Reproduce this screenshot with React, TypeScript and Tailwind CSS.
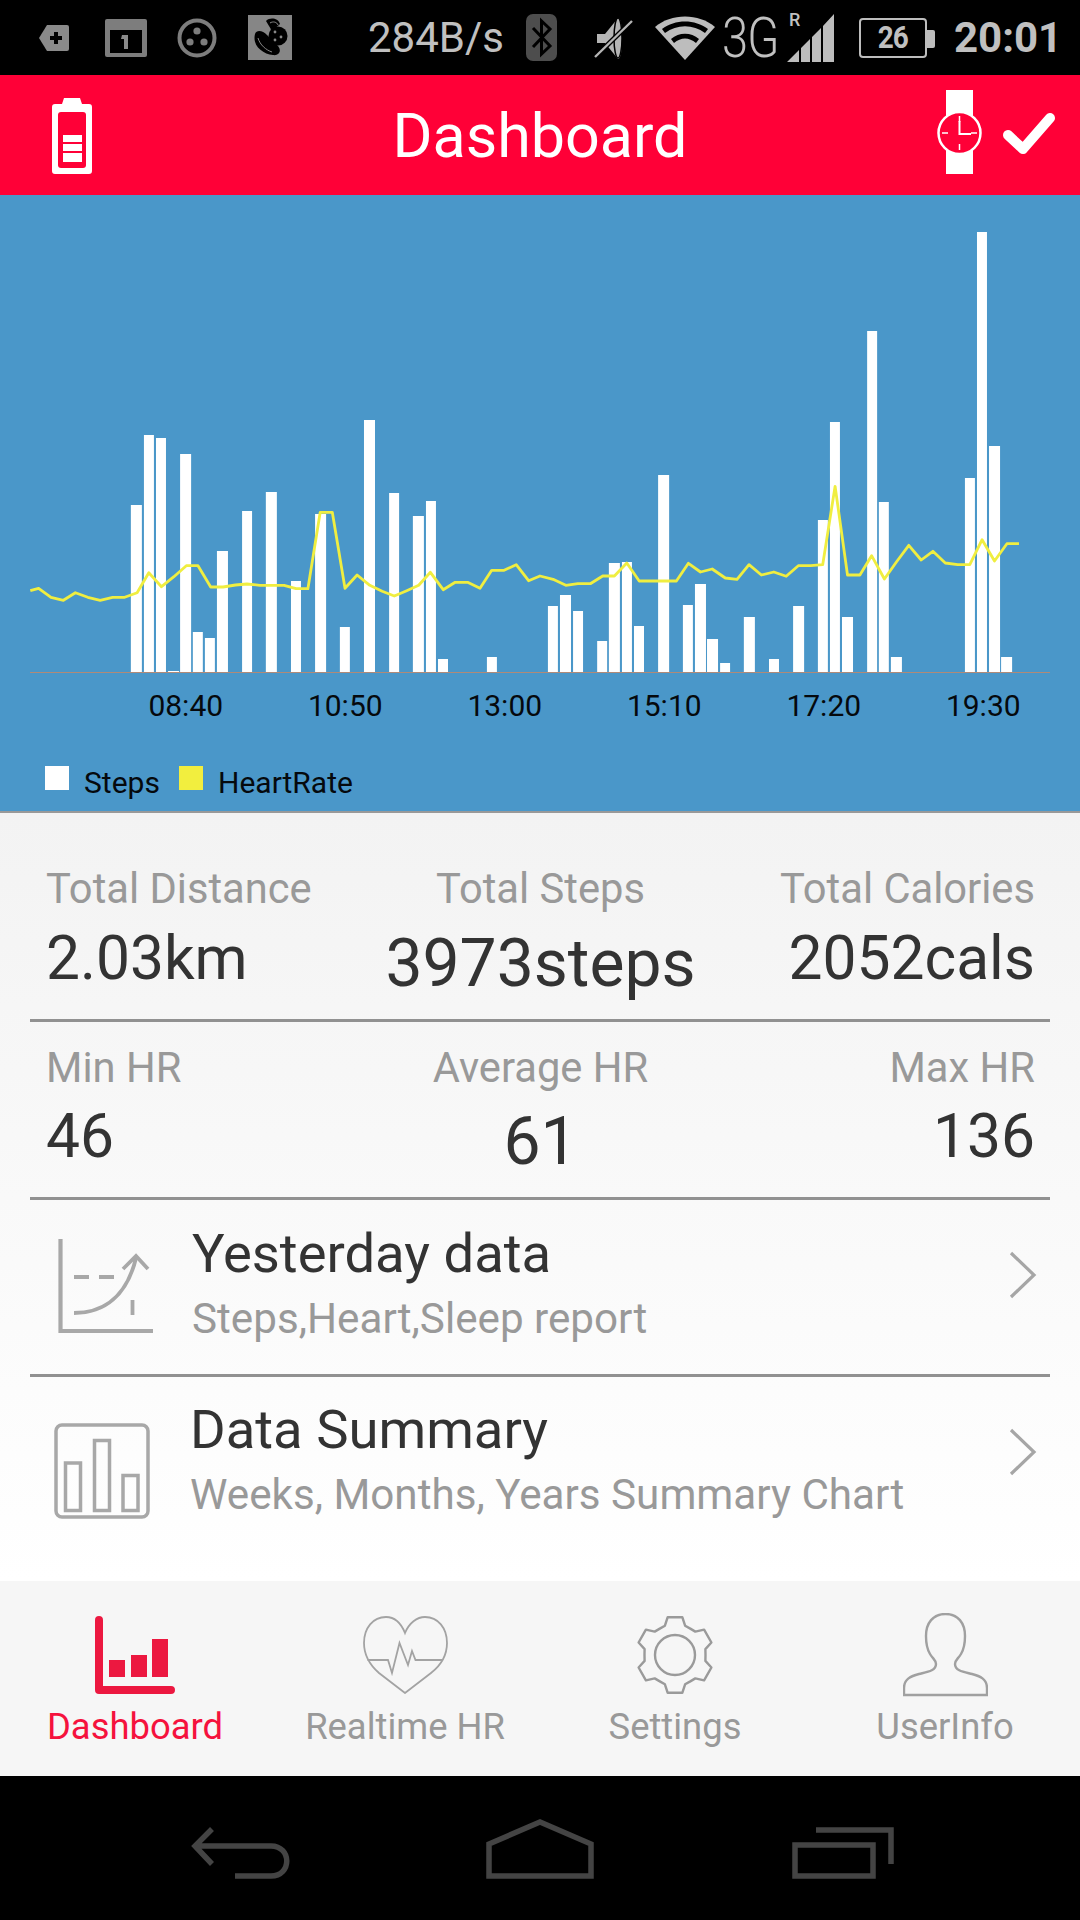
const K = 2.904;
const leftBars = [[380,412,505],[418,447,435],[453,482,438],[488,520,671],[523,555,454],[560,589,632],[595,624,638],[630,662,551],[703,732,511],[772,804,492],[845,874,581],[915,947,514],[987,1016,627],[1057,1089,420],[1130,1159,493],[1199,1231,516],[1237,1266,501],[1272,1301,659],[1414,1443,657]];
const rightBars = [[23,52,606],[58,90,595],[96,125,611],[166,195,641],[200,232,563],[238,267,562],[273,302,626],[343,375,475],[415,444,605],[450,482,584],[485,517,639],[523,552,663],[592,624,617],[665,694,659],[735,767,606],[807,836,520],[842,871,422],[877,909,617],[950,979,331],[984,1013,502],[1019,1051,657],[1234,1263,478],[1269,1298,232],[1304,1336,446],[1339,1371,657]];
const leftLine = [[88,572],[112,565],[148,592],[184,601],[219,578],[255,592],[291,601],[327,592],[362,592],[398,578],[432,518],[469,560],[505,530],[541,497],[575,497],[612,561],[648,561],[684,555],[717,552],[755,556],[825,556],[860,566],[894,566],[930,337],[965,337],[1002,565],[1037,525],[1074,556],[1110,574],[1145,588],[1181,572],[1216,556],[1250,517],[1287,569],[1322,547],[1358,547],[1394,565],[1428,511],[1464,511],[1499,494],[1535,542]];
const rightLine = [[0,528],[38,538],[75,556],[110,551],[146,551],[182,528],[216,528],[252,489],[288,543],[324,543],[360,543],[396,543],[431,490],[466,516],[500,507],[538,534],[572,538],[607,494],[643,525],[679,516],[715,529],[750,497],[786,497],[821,494],[857,259],[893,525],[929,525],[963,467],[1000,537],[1035,486],[1071,436],[1107,480],[1141,454],[1177,489],[1213,494],[1248,494],[1284,419],[1320,483],[1356,431],[1391,431]];
const bars = [
  ...leftBars.map(([l, r, t]) => ({ x: l / K, w: (r - l) / K, t })),
  ...rightBars.map(([l, r, t]) => ({ x: 540 + l / K, w: (r - l) / K, t })),
];
const linePts = [
  ...leftLine.map(([x, y]) => `${(x / K).toFixed(1)},${(400 + y / 3).toFixed(1)}`),
  ...rightLine.map(([x, y]) => `${(540 + x / K).toFixed(1)},${(400 + y / 3).toFixed(1)}`),
].join(" ");

function gearPath() {
  const cx = 38, cy = 40, out: string[] = [];
  for (let k = 0; k < 6; k++) {
    const a = -90 + k * 60;
    const pts: [number, number][] = [[-30, 30.5], [-19, 31], [-11, 38.5], [11, 38.5], [19, 31]];
    pts.forEach(([d, r]) => {
      const t = ((a + d) * Math.PI) / 180;
      out.push(`${(cx + r * Math.cos(t)).toFixed(1)},${(cy + r * Math.sin(t)).toFixed(1)}`);
    });
  }
  return out.join(" ");
}

function StatusBar() {
  return (
    <div className="flex h-[75px] shrink-0 items-center bg-black pl-[38px] text-[#c0c0c0]">
      <svg width="32" height="28" viewBox="0 0 32 28" className="shrink-0">
        <path d="M9 1H29a2 2 0 0 1 2 2V25a2 2 0 0 1-2 2H9L1 14Z" fill="#8a8a8a" />
        <path d="M18 8v12M12 14h12" stroke="#000" strokeWidth="4" />
      </svg>
      <svg width="42" height="38" viewBox="0 0 42 38" className="ml-[35px] shrink-0">
        <rect x="0" y="0" width="42" height="38" rx="2" fill="#7d7d7d" />
        <rect x="5" y="11" width="32" height="23" fill="#000" />
        <path d="M17 16h6v14h-4V20h-3Z" fill="#8a8a8a" />
      </svg>
      <svg width="40" height="40" viewBox="0 0 40 40" className="ml-[30px] shrink-0">
        <circle cx="20" cy="20" r="17.5" fill="none" stroke="#7d7d7d" strokeWidth="4" />
        <circle cx="20" cy="13" r="3.6" fill="#7d7d7d" />
        <circle cx="13" cy="24" r="3.6" fill="#7d7d7d" />
        <circle cx="27" cy="24" r="3.6" fill="#7d7d7d" />
      </svg>
      <svg width="44" height="45" viewBox="0 0 44 45" className="ml-[31px] shrink-0">
        <rect width="44" height="45" fill="#868686" />
        <path d="M18 6C22 2 30 3 32 9L24 16Z" fill="#000" />
        <path d="M7 19C9 14 15 16 19 20L30 31C34 36 31 41 25 40C15 39 4 31 7 19Z" fill="#000" />
        <circle cx="30" cy="21" r="9.5" fill="#000" />
        <circle cx="27" cy="17" r="1.4" fill="#888" />
        <circle cx="33" cy="22" r="1.4" fill="#888" />
        <circle cx="27" cy="25" r="1.4" fill="#888" />
        <path d="M22 8C25 6 29 7 30 10M10 23C12 30 18 35 24 37" stroke="#888" strokeWidth="1" fill="none" />
      </svg>
      <span className="ml-[76px] w-[136px] shrink-0 font-['Roboto',sans-serif] text-[42px] leading-none whitespace-nowrap">284B/s</span>
      <svg width="31" height="47" viewBox="0 0 31 47" className="ml-[22px] shrink-0">
        <rect width="31" height="47" rx="7" fill="#4d4d4d" />
        <path d="M7 14L24 32L15.5 40V7L24 15L7 33" fill="none" stroke="#000" strokeWidth="3" />
      </svg>
      <svg width="40" height="46" viewBox="0 0 40 46" className="ml-[37px] shrink-0">
        <path d="M3 19H11L24 3C27 3 28 12 28 23C28 34 27 44 24 44L11 28H3Z" fill="#b5b5b5" />
        <ellipse cx="24" cy="23" rx="4" ry="20" fill="none" stroke="#000" strokeWidth="1.5" />
        <path d="M1 42L38 6" stroke="#000" strokeWidth="5" />
        <path d="M1 42L38 6" stroke="#b5b5b5" strokeWidth="2.4" />
      </svg>
      <svg width="60" height="44" viewBox="0 0 60 44" className="ml-[21px] shrink-0">
        <path d="M0 11C16 -3 44 -3 60 11L30 44Z" fill="#bdbdbd" />
        <path d="M7 13C20 3 40 3 53 13L50 17C38 8 22 8 10 17Z" fill="#000" />
        <path d="M16 23C24 16 36 16 44 23L41 27C34 21 26 21 19 27Z" fill="#000" />
      </svg>
      <span className="ml-[7px] inline-block w-[60px] origin-left scale-x-[0.84] font-['Roboto',sans-serif] text-[56px] leading-none font-light tracking-[-1px] whitespace-nowrap">3G</span>
      <div className="relative ml-[5px] h-[48px] w-[48px] shrink-0">
        <span className="absolute top-[-3px] left-[2px] font-['Roboto',sans-serif] text-[18px] leading-none font-medium">R</span>
        <svg width="48" height="48" viewBox="0 0 48 48" className="absolute top-0 left-0">
          <path d="M0 48L12 36V48ZM14 34L23 25V48H14ZM25 23L34 14V48H25ZM36 12L47 0V48H36Z" fill="#bdbdbd" />
        </svg>
      </div>
      <div className="relative ml-[24px] flex h-[40px] w-[68px] shrink-0 items-center justify-center rounded-[4px] border-2 border-[#bdbdbd]">
        <span className="font-['Roboto',sans-serif] text-[31px] leading-none font-bold tracking-[-1px] inline-block scale-x-90">26</span>
        <div className="absolute top-[10px] right-[-10px] h-[18px] w-[8px] rounded-r-[2px] bg-[#bdbdbd]" />
      </div>
      <span className="ml-[27px] font-['Roboto',sans-serif] text-[42px] leading-none font-bold whitespace-nowrap">20:01</span>
    </div>
  );
}

function AppBar() {
  return (
    <div className="relative flex h-[120px] shrink-0 items-center justify-center bg-[#ff0037]">
      <svg width="40" height="76" viewBox="0 0 40 76" className="absolute top-[23px] left-[52px]">
        <path d="M12 0H28L30 6H37a3 3 0 0 1 3 3V73a3 3 0 0 1-3 3H3a3 3 0 0 1-3-3V9a3 3 0 0 1 3-3H10Z" fill="#fff" />
        <rect x="6" y="14" width="28" height="56" rx="3" fill="#ff0037" />
        <path d="M11 37H30V44H11ZM11 46H30V53H11ZM11 55H30V64H11Z" fill="#fff" />
      </svg>
      <span className="pt-[2px] font-['Roboto',sans-serif] text-[61px] leading-none text-white">Dashboard</span>
      <svg width="48" height="84" viewBox="0 0 48 84" className="absolute top-[15px] left-[936px]">
        <rect x="10" y="0" width="27" height="84" fill="#fff" />
        <circle cx="23.5" cy="43" r="21" fill="#ff0037" stroke="#fff" strokeWidth="2.5" />
        <path d="M23.5 26V32M23.5 54V60M6 43H12M35 43H41" stroke="#fff" strokeWidth="1.5" />
        <path d="M23.5 31V44H35" stroke="#fff" strokeWidth="2" fill="none" />
      </svg>
      <svg width="52" height="42" viewBox="0 0 52 42" className="absolute top-[38px] left-[1003px]">
        <path d="M5 22L20 36L47 5" stroke="#fff" strokeWidth="10" fill="none" strokeLinecap="round" strokeLinejoin="round" />
      </svg>
    </div>
  );
}

function Chart() {
  const labels = ["08:40", "10:50", "13:00", "15:10", "17:20", "19:30"];
  return (
    <div className="flex h-[618px] shrink-0 flex-col border-b-2 border-[#999999] bg-[#4a97c9]">
      <svg width="1080" height="480" viewBox="0 195 1080 480" className="block shrink-0">
        {bars.map((b, i) => (
          <rect key={i} x={b.x} y={b.t} width={b.w} height={672 - b.t} fill="#fff" />
        ))}
        <line x1="30" x2="1050" y1="672.5" y2="672.5" stroke="#b08a78" strokeWidth="1" />
        <polyline points={linePts} fill="none" stroke="#f0ee40" strokeWidth="2.8" strokeLinejoin="round" />
      </svg>
      <div className="mt-[13px] flex pl-[106px]">
        {labels.map((l) => (
          <span key={l} className="w-[159.5px] text-center font-['Roboto',sans-serif] text-[30px] leading-[36px] text-[#05090d]">{l}</span>
        ))}
      </div>
      <div className="mt-[41px] flex items-center pl-[45px] font-['Roboto',sans-serif] text-[30px] leading-[36px] text-[#05090d]">
        <div className="mb-[10px] h-[24px] w-[24px] bg-white" />
        <span className="ml-[15px] w-[95px]">Steps</span>
        <div className="mb-[10px] h-[24px] w-[24px] bg-[#f2ee3e]" />
        <span className="ml-[15px]">HeartRate</span>
      </div>
    </div>
  );
}

function Stat({ label, value, align, gap }: { label: string; value: string; align: "left" | "center" | "right"; gap: string }) {
  const a = align === "left" ? "items-start" : align === "right" ? "items-end" : "items-center";
  const size = align === "center" ? "text-[66px] leading-[76px]" : "text-[60.5px] leading-[70px]";
  return (
    <div className={`flex flex-col ${a} font-['Roboto',sans-serif]`}>
      <span className="text-[41.7px] leading-[48px] whitespace-nowrap text-[#999999]">{label}</span>
      <span className={`${gap} ${size} whitespace-nowrap text-[#333333]`}>{value}</span>
    </div>
  );
}

function Chevron({ cls }: { cls: string }) {
  return (
    <svg width="30" height="50" viewBox="0 0 30 50" className={`shrink-0 ${cls}`}>
      <path d="M3 3L26 25L3 47" fill="none" stroke="#a6a6a6" strokeWidth="3.2" />
    </svg>
  );
}

function Row({ icon, title, sub, cls, iconCls, chevCls }: { icon: React.ReactNode; title: string; sub: string; cls: string; iconCls: string; chevCls: string }) {
  return (
    <div className={`mx-[30px] flex items-start pr-[12px] ${cls}`}>
      <div className={`w-[136px] shrink-0 ${iconCls}`}>{icon}</div>
      <div className="flex-1 font-['Roboto',sans-serif]">
        <div className="text-[54.4px] leading-[60px] text-[#333333]">{title}</div>
        <div className="mt-[12px] text-[42.2px] leading-[46px] text-[#999999]">{sub}</div>
      </div>
      <Chevron cls={chevCls} />
    </div>
  );
}

function Content() {
  return (
    <div className="flex flex-1 flex-col bg-linear-to-b from-[#f3f3f3] to-white">
      <div className="mx-[30px] h-[209px] border-b-[3px] border-[#919191] pt-[52px] pr-[15px] pl-[16px]">
        <div className="grid grid-cols-3">
          <Stat label="Total Distance" value="2.03km" align="left" gap="mt-[11px]" />
          <Stat label="Total Steps" value="3973steps" align="center" gap="mt-[13px]" />
          <Stat label="Total Calories" value="2052cals" align="right" gap="mt-[11px]" />
        </div>
      </div>
      <div className="mx-[30px] h-[178px] border-b-[3px] border-[#919191] pt-[22px] pr-[15px] pl-[16px]">
        <div className="grid grid-cols-3">
          <Stat label="Min HR" value="46" align="left" gap="mt-[10px]" />
          <Stat label="Average HR" value="61" align="center" gap="mt-[12px]" />
          <Stat label="Max HR" value="136" align="right" gap="mt-[10px]" />
        </div>
      </div>
      <div className="flex h-[177px] flex-col justify-between pt-[24px]">
        <Row
          cls="pl-[26px]"
          iconCls="mt-[11px]"
          chevCls="mt-[26px]"
          title="Yesterday data"
          sub="Steps,Heart,Sleep report"
          icon={
            <svg width="100" height="100" viewBox="56 1235 100 100" className="block">
              <g fill="none" stroke="#a8a8a8" strokeWidth="3.8">
                <path d="M60.5 1239V1331H153" strokeWidth="4.2" />
                <path d="M74 1313C105 1313 127 1295 136 1258" />
                <path d="M123 1269L136 1256L148 1269" />
                <path d="M74 1277H89M99 1277H114M132.5 1300V1315" />
              </g>
            </svg>
          }
        />
        <div className="mx-[30px] h-[3px] bg-[#919191]" />
      </div>
      <div className="pt-[23px]">
        <Row
          cls="pl-[24px]"
          iconCls="mt-[23px]"
          chevCls="mt-[27px]"
          title="Data Summary"
          sub="Weeks, Months, Years Summary Chart"
          icon={
            <svg width="96" height="96" viewBox="54 1423 96 96" className="block">
              <g fill="none" stroke="#a8a8a8" strokeWidth="3.5">
                <rect x="56" y="1425" width="92" height="92" rx="6" />
                <rect x="65.5" y="1463" width="15" height="47.5" />
                <rect x="94.5" y="1440.5" width="15" height="70" />
                <rect x="123" y="1475.5" width="15" height="35" />
              </g>
            </svg>
          }
        />
      </div>
    </div>
  );
}

function Tab({ label, active, icon }: { label: string; active?: boolean; icon: React.ReactNode }) {
  return (
    <div className="flex flex-col items-center">
      <div className="flex h-[84px] items-center">{icon}</div>
      <span className={`mt-[9px] font-['Roboto',sans-serif] text-[36.4px] leading-[42px] ${active ? "text-[#f5123d]" : "text-[#999999]"}`}>{label}</span>
    </div>
  );
}

function TabBar() {
  return (
    <div className="grid h-[195px] shrink-0 grid-cols-4 bg-[#f6f6f6] pt-[32px]">
      <Tab
        label="Dashboard"
        active
        icon={
          <svg width="80" height="78" viewBox="0 0 80 78">
            <path d="M4 4V74H76" fill="none" stroke="#ec1840" strokeWidth="8" strokeLinecap="round" strokeLinejoin="round" />
            <path d="M14 44H30V61H14ZM36 39H52V61H36ZM57 23H73V61H57Z" fill="#ec1840" />
          </svg>
        }
      />
      <Tab
        label="Realtime HR"
        icon={
          <svg width="85" height="78" viewBox="0 0 85 78" fill="none" stroke="#a3a3a3" strokeWidth="1.8">
            <path d="M42 17C38 7 31 1 23 1C10 1 1 12 1 27C1 40 8 50 16 57L42 77L68 57C77 50 84 40 84 27C84 12 75 1 62 1C54 1 46 7 42 17Z" />
            <path d="M4.5 44H25L29 57L36.5 27L45 49L49 35L52.5 44H79" />
          </svg>
        }
      />
      <Tab
        label="Settings"
        icon={
          <svg width="78" height="82" viewBox="-1 -1 78 82" fill="none" stroke="#9a9a9a" strokeWidth="2.4" strokeLinejoin="round">
            <polygon points={gearPath()} />
            <circle cx="38" cy="40" r="20" />
          </svg>
        }
      />
      <Tab
        label="UserInfo"
        icon={
          <svg width="85" height="84" viewBox="0 0 85 84" fill="none" stroke="#a0a0a0" strokeWidth="2.4">
            <path d="M1 82L1 75C1 66 8 63 16 61C24 59 33 58 33 51C33 47 30 46 27 41C24 36 23 30 23 23C23 10 30 1 42.5 1C55 1 62 10 62 23C62 30 61 36 58 41C55 46 52 47 52 51C52 58 61 59 69 61C77 63 84 66 84 75L84 82Z" />
          </svg>
        }
      />
    </div>
  );
}

function NavBar() {
  return (
    <div className="flex h-[144px] shrink-0 items-start bg-black pt-[51px] pl-[191px]">
      <svg width="100" height="52" viewBox="0 0 100 52" fill="none" stroke="#444444" strokeWidth="5.5" className="shrink-0">
        <path d="M21 2L4 19L21 37M4 19H80C101 19 101 49 80 49H44" />
      </svg>
      <svg width="108" height="60" viewBox="0 0 108 60" fill="none" stroke="#444444" strokeWidth="5.5" className="mt-[-8px] ml-[195px] shrink-0">
        <path d="M3 57V25L54 3L105 25V57Z" />
      </svg>
      <svg width="102" height="52" viewBox="0 0 102 52" fill="none" stroke="#444444" strokeWidth="5.5" className="ml-[198px] shrink-0">
        <rect x="3" y="18" width="78" height="31" />
        <path d="M24 3H99V37" />
      </svg>
    </div>
  );
}

export default function App() {
  return (
    <div className="flex h-[1920px] w-[1080px] flex-col overflow-hidden">
      <StatusBar />
      <AppBar />
      <Chart />
      <Content />
      <TabBar />
      <NavBar />
    </div>
  );
}
